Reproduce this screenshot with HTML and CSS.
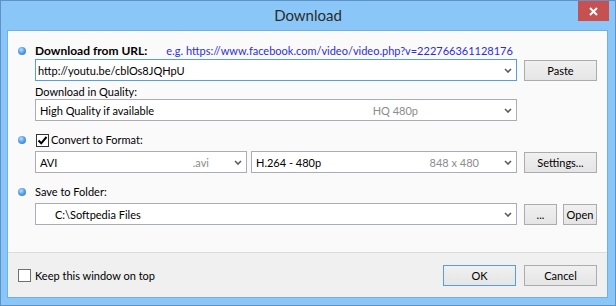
FILE: index.html
```html
<!doctype html>
<html lang="en">

<head>
    <meta charset="utf-8">
    <title>Download</title>
    <link rel="stylesheet" href="styles.css">
</head>

<body>
    <div class="window">
        <div class="titlebar">
            <div class="title">Download</div>
            <div class="close">
                <svg width="9" height="9" viewBox="0 0 9 9"><path d="M1 1 L8 8 M8 1 L1 8" stroke="#fff" stroke-width="2" fill="none"/></svg>
            </div>
        </div>

        <div class="client">
            <div class="content">
                <div class="head">
                    <span class="dot"></span>
                    <span class="strong">Download from URL:</span>
                    <span class="example">e.g. https://www.facebook.com/video/video.php?v=222766361128176</span>
                </div>
                <div class="line">
                    <div class="combo wide focused">
                        <span class="value url">http://youtu.be/cblOs8JQHpU</span>
                        <svg class="chev" width="8" height="5" viewBox="0 0 8 5"><path d="M1 1 L4 4 L7 1" /></svg>
                    </div>
                    <div class="btn">Paste</div>
                </div>
                <div class="sublabel">Download in Quality:</div>
                <div class="line">
                    <div class="combo wide">
                        <span class="value">High Quality if available</span>
                        <span class="hint hq">HQ 480p</span>
                        <svg class="chev" width="8" height="5" viewBox="0 0 8 5"><path d="M1 1 L4 4 L7 1" /></svg>
                    </div>
                </div>

                <div class="head spaced">
                    <span class="dot"></span>
                    <span class="check">
                        <svg width="11" height="11" viewBox="0 0 11 11"><path d="M1.5 5.5 L4.2 8.3 L9.5 2" /></svg>
                    </span>
                    <span>Convert to Format:</span>
                </div>
                <div class="line">
                    <div class="pair">
                        <div class="combo format">
                            <span class="value">AVI</span>
                            <span class="hint">.avi</span>
                            <svg class="chev" width="8" height="5" viewBox="0 0 8 5"><path d="M1 1 L4 4 L7 1" /></svg>
                        </div>
                        <div class="combo codec">
                            <span class="value">H.264 - 480p</span>
                            <span class="hint">848 x 480</span>
                            <svg class="chev" width="8" height="5" viewBox="0 0 8 5"><path d="M1 1 L4 4 L7 1" /></svg>
                        </div>
                    </div>
                    <div class="btn">Settings...</div>
                </div>

                <div class="head spaced">
                    <span class="dot"></span>
                    <span>Save to Folder:</span>
                </div>
                <div class="line folder-line">
                    <div class="combo wide">
                        <span class="value folder">C:\Softpedia Files</span>
                        <svg class="chev" width="8" height="5" viewBox="0 0 8 5"><path d="M1 1 L4 4 L7 1" /></svg>
                    </div>
                    <div class="btns">
                        <div class="btn browse">...</div>
                        <div class="btn open">Open</div>
                    </div>
                </div>
            </div>

            <div class="footer">
                <span class="check empty"></span>
                <span class="keep">Keep this window on top</span>
                <div class="actions">
                    <div class="btn default">OK</div>
                    <div class="btn">Cancel</div>
                </div>
            </div>
        </div>
    </div>
</body>

</html>
```

FILE: styles.css
```css
body {
    margin: 0;
    font-family: "Segoe UI", Lato, "Liberation Sans", sans-serif;
    font-size: 11px;
    color: #000;
}

.window {
    box-sizing: border-box;
    width: 616px;
    height: 306px;
    border: 1px solid #5f93c8;
    background: #8ac7f8;
    display: flex;
    flex-direction: column;
}

.titlebar {
    height: 29px;
    display: grid;
    grid-template-columns: 1fr auto 1fr;
    align-items: start;
}

.title {
    grid-column: 2;
    line-height: 29px;
    font-size: 15px;
    color: #2b2b2b;
}

.close {
    grid-column: 3;
    justify-self: end;
    width: 31px;
    height: 20px;
    margin-right: 6px;
    background: #c75050;
    display: flex;
    align-items: center;
    justify-content: center;
}

.client {
    flex: 1;
    margin: 0 7px 7px 6px;
    border: 1px solid #74aee6;
    background: #f0f0f0;
    display: flex;
    flex-direction: column;
}

.content {
    height: 221px;
    background: #fafafa;
    border-bottom: 1px solid #dcdcdc;
    padding-left: 27px;
}

.head {
    display: flex;
    align-items: center;
    height: 14px;
    line-height: 14px;
    margin-top: 13px;
    margin-left: -17px;
}

.head.spaced {
    margin-top: 12px;
}

.head.spaced + .folder-line {
    margin-top: 2px;
}

.dot {
    width: 8px;
    height: 8px;
    border-radius: 50%;
    margin-right: 9px;
    background: radial-gradient(circle at 40% 35%, #bfe0ff 0, #5aa2e8 45%, #2c6fbd 100%);
}

.strong {
    font-weight: bold;
    font-size: 12px;
}

.example {
    margin-left: 19px;
    color: #2d2ddc;
}

.sublabel {
    height: 14px;
    line-height: 14px;
    margin-top: 4px;
}

.line {
    display: flex;
    align-items: center;
    gap: 7px;
    margin-top: 1px;
}

.sublabel + .line {
    margin-top: 0;
}

.head.spaced + .line {
    margin-top: 4px;
}

.combo {
    box-sizing: border-box;
    height: 22px;
    border: 1px solid #abadb3;
    background: #fff;
    display: flex;
    align-items: center;
    padding-left: 4px;
}

.combo.wide {
    width: 482px;
}

.combo.focused {
    border-color: #569de5;
}

.combo.format {
    width: 212px;
}

.combo.codec {
    width: 266px;
}

.pair {
    display: flex;
    gap: 4px;
}

.value {
    flex: 1;
    white-space: nowrap;
}

.value.url {
    margin-left: -2px;
}

.value.folder {
    padding-left: 15px;
}

.hint {
    color: #8c8c8c;
    margin-right: 25px;
}

.hint.hq {
    margin-right: 86px;
}

.chev {
    margin-right: 4px;
}

.chev path {
    fill: none;
    stroke: #5c5c5c;
    stroke-width: 1.6;
}

.btn {
    box-sizing: border-box;
    width: 73px;
    height: 21px;
    line-height: 19px;
    text-align: center;
    border: 1px solid #acacac;
    background: linear-gradient(#f0f0f0, #e5e5e5);
}

.btns {
    display: flex;
    gap: 6px;
}

.btn.browse {
    width: 33px;
}

.btn.open {
    width: 34px;
}

.btn.default {
    border-color: #569de5;
}

.check {
    box-sizing: border-box;
    width: 13px;
    height: 13px;
    border: 1px solid #333;
    background: #fff;
    margin-left: 1px;
    margin-right: 2px;
    display: flex;
    align-items: center;
    justify-content: center;
}

.check path {
    fill: none;
    stroke: #000;
    stroke-width: 2;
}

.footer {
    flex: 1;
    display: flex;
    align-items: center;
    padding: 0 10px 0 10px;
}

.check.empty {
    border-color: #707070;
    margin: 0 4px 0 0;
}

.actions {
    margin-left: auto;
    display: flex;
    gap: 8px;
}
```
